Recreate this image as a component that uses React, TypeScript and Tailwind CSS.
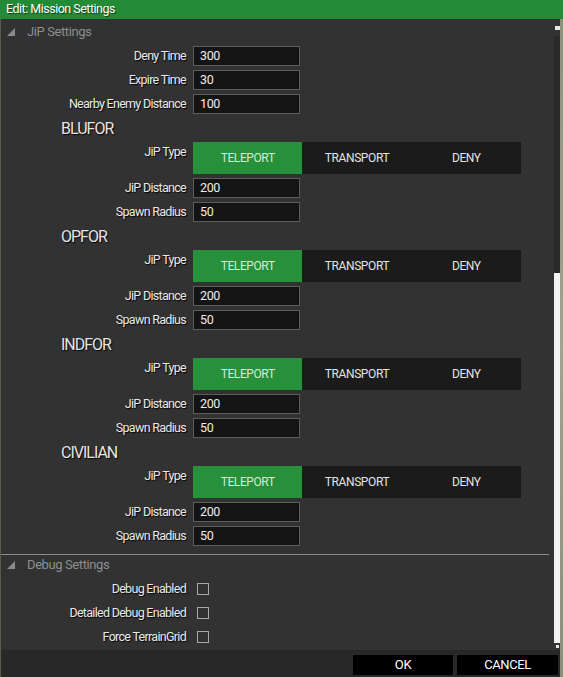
import React from "react";

const sides = ["BLUFOR", "OPFOR", "INDFOR", "CIVILIAN"];

const labelCls =
  "w-[185px] shrink-0 text-right text-[12.5px] leading-[20px] tracking-[-0.7px] text-[#e8e8e8] [text-shadow:1px_1px_1px_rgba(0,0,0,0.9)]";

function Corner() {
  return (
    <svg width="8" height="8" viewBox="0 0 8 8">
      <path d="M8 0 L8 8 L0 8 Z" fill="#8a8a8a" />
    </svg>
  );
}

function GroupHeader({ title }: { title: string }) {
  return (
    <div className="flex h-[20px] items-center pl-[6px]">
      <Corner />
      <span className="ml-[12px] text-[13px] tracking-[-0.4px] text-[#8e8e8e]">{title}</span>
    </div>
  );
}

function Field({ label, value }: { label: string; value: string }) {
  return (
    <div className="flex h-[20px] items-center">
      <div className={labelCls}>{label}</div>
      <div className="ml-[7px] flex h-[20px] w-[107px] items-center border border-[#5c5c5c] bg-[#141414] px-[6px] text-[12.5px] tracking-[-0.4px] text-[#ececec]">
        {value}
      </div>
    </div>
  );
}

function Check({ label }: { label: string }) {
  return (
    <div className="flex h-[20px] items-center">
      <div className={labelCls}>{label}</div>
      <div className="ml-[11px] h-[12px] w-[12px] border border-[#a8a8a8]" />
    </div>
  );
}

function JipType() {
  const opts = ["TELEPORT", "TRANSPORT", "DENY"];
  return (
    <div className="flex h-[32px] items-start">
      <div className={labelCls}>JiP Type</div>
      <div className="ml-[7px] flex h-[32px] w-[328px] bg-[#1b1b1b]">
        {opts.map((o, i) => (
          <div
            key={o}
            className={
              i === 0
                ? "flex flex-1 items-center justify-center bg-[#27903a] text-[12px] tracking-[-0.4px] text-[#d6ead6]"
                : "flex flex-1 items-center justify-center text-[12px] tracking-[-0.4px] text-[#e2e2e2]"
            }
          >
            {o}
          </div>
        ))}
      </div>
    </div>
  );
}

function Side({ name }: { name: string }) {
  return (
    <>
      <div className="flex h-[20px] items-center pl-[60px] pt-[2px] text-[16px] tracking-[-1px] text-[#e4e4e4] [text-shadow:1px_1px_1px_rgba(0,0,0,0.9)]">
        {name}
      </div>
      <JipType />
      <Field label="JiP Distance" value="200" />
      <Field label="Spawn Radius" value="50" />
    </>
  );
}

export default function App() {
  return (
    <div className="flex h-[677px] w-[563px] flex-col overflow-hidden bg-[#323232] font-[Roboto,sans-serif]">
      <div className="flex h-[19px] shrink-0 items-center bg-[#238a36] pl-[6px] text-[12.5px] tracking-[-0.5px] text-white [text-shadow:1px_1px_1px_rgba(0,0,0,0.6)]">
        Edit: Mission Settings
      </div>
      <div className="flex flex-1">
        <div className="w-[1px] bg-[#5b5a4c]" />
        <div className="flex flex-1 flex-col">
          <div className="flex h-[631px]">
            <div className="flex flex-1 flex-col overflow-hidden pt-[3px]">
              <div className="flex flex-col gap-[4px]">
                <GroupHeader title="JiP Settings" />
                <Field label="Deny Time" value="300" />
                <Field label="Expire Time" value="30" />
                <Field label="Nearby Enemy Distance" value="100" />
                {sides.map((s) => (
                  <Side key={s} name={s} />
                ))}
              </div>
              <div className="mt-[8px] h-[1px] w-[548px] bg-[#8a8a8a]" />
              <div className="flex flex-col gap-[4px]">
                <GroupHeader title="Debug Settings" />
                <Check label="Debug Enabled" />
                <Check label="Detailed Debug Enabled" />
                <Check label="Force TerrainGrid" />
              </div>
            </div>
            <div className="flex w-[6px] flex-col items-center pt-[7px]">
              <div className="h-[4px] w-[5px] bg-[#e8e8e8]" />
              <div className="mt-[6px] flex w-[6px] flex-col">
                <div className="h-[237px] bg-[#2a2a2a]" />
                <div className="h-[370px] bg-[#f2f2f2]" />
              </div>
              <div className="mt-[2px] h-[3px] w-[3px] bg-[#e8e8e8]" />
            </div>
          </div>
          <div className="flex flex-1 items-start justify-end gap-[4px] bg-[#282828] pr-[2px] pt-[5px]">
            <button className="flex h-[20px] w-[100px] items-center justify-center bg-black text-[13px] tracking-[-0.4px] text-white">
              OK
            </button>
            <button className="flex h-[20px] w-[101px] items-center justify-center bg-black text-[13px] tracking-[-0.4px] text-white">
              CANCEL
            </button>
          </div>
        </div>
        <div className="w-[3px] bg-[linear-gradient(180deg,#8e927c,#a3a28c,#8a8e7a)]" />
      </div>
    </div>
  );
}
